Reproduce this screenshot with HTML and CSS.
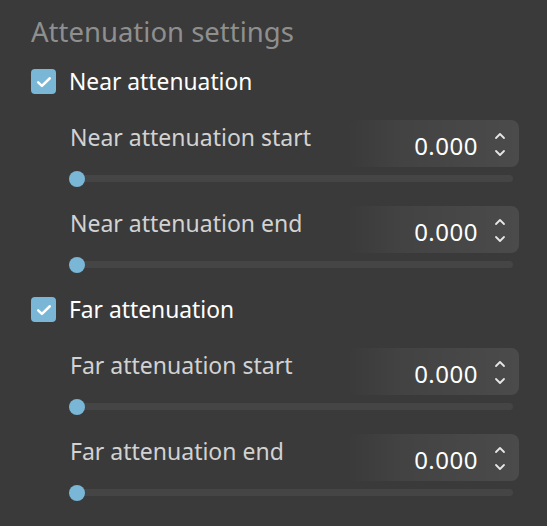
FILE: index.html
```html
<!DOCTYPE html>
<html>
<head>
<meta charset="utf-8">
<link rel="stylesheet" href="styles.css">
</head>
<body>
<div class="panel">
  <div class="title">Attenuation settings</div>

  <div class="section">
    <label class="check-row">
      <span class="checkbox"><svg viewBox="0 0 24 24" width="20" height="20"><path d="M5 12.5l4.5 4.2L19 7.5" fill="none" stroke="#fff" stroke-width="3" stroke-linecap="round" stroke-linejoin="round"/></svg></span>
      <span class="check-label">Near attenuation</span>
    </label>
    <div class="field">
      <div class="field-top">
        <span class="field-label">Near attenuation start</span>
        <div class="spin"><span class="spin-value">0.000</span><span class="arrows"><svg viewBox="0 0 12 28" width="12" height="28"><path d="M2 8l4-4 4 4M2 21l4 4 4-4" fill="none" stroke="#e6e6e6" stroke-width="1.8" stroke-linecap="round" stroke-linejoin="round"/></svg></span></div>
      </div>
      <div class="slider"><span class="thumb"></span></div>
    </div>
    <div class="field">
      <div class="field-top">
        <span class="field-label">Near attenuation end</span>
        <div class="spin"><span class="spin-value">0.000</span><span class="arrows"><svg viewBox="0 0 12 28" width="12" height="28"><path d="M2 8l4-4 4 4M2 21l4 4 4-4" fill="none" stroke="#e6e6e6" stroke-width="1.8" stroke-linecap="round" stroke-linejoin="round"/></svg></span></div>
      </div>
      <div class="slider"><span class="thumb"></span></div>
    </div>
  </div>

  <div class="section">
    <label class="check-row">
      <span class="checkbox"><svg viewBox="0 0 24 24" width="20" height="20"><path d="M5 12.5l4.5 4.2L19 7.5" fill="none" stroke="#fff" stroke-width="3" stroke-linecap="round" stroke-linejoin="round"/></svg></span>
      <span class="check-label">Far attenuation</span>
    </label>
    <div class="field">
      <div class="field-top">
        <span class="field-label">Far attenuation start</span>
        <div class="spin"><span class="spin-value">0.000</span><span class="arrows"><svg viewBox="0 0 12 28" width="12" height="28"><path d="M2 8l4-4 4 4M2 21l4 4 4-4" fill="none" stroke="#e6e6e6" stroke-width="1.8" stroke-linecap="round" stroke-linejoin="round"/></svg></span></div>
      </div>
      <div class="slider"><span class="thumb"></span></div>
    </div>
    <div class="field">
      <div class="field-top">
        <span class="field-label">Far attenuation end</span>
        <div class="spin"><span class="spin-value">0.000</span><span class="arrows"><svg viewBox="0 0 12 28" width="12" height="28"><path d="M2 8l4-4 4 4M2 21l4 4 4-4" fill="none" stroke="#e6e6e6" stroke-width="1.8" stroke-linecap="round" stroke-linejoin="round"/></svg></span></div>
      </div>
      <div class="slider"><span class="thumb"></span></div>
    </div>
  </div>
</div>
</body>
</html>
```

FILE: styles.css
```css
html, body {
  margin: 0;
  padding: 0;
  background: #3a3a3a;
  height: 100%;
}
body {
  font-family: "Noto Sans", "Open Sans", sans-serif;
  -webkit-font-smoothing: antialiased;
}
.panel {
  padding: 14px 28px 0 31px;
}
.title {
  font-size: 27.5px;
  line-height: 36px;
  color: #8f8f8f;
  height: 36px;
  white-space: nowrap;
}
.section {
  display: flex;
  flex-direction: column;
}
.section + .section {
  margin-top: 29px;
}
.title + .section {
  margin-top: 19px;
}
.check-row {
  display: flex;
  align-items: center;
  gap: 13px;
  height: 25px;
}
.checkbox {
  width: 25px;
  height: 25px;
  border-radius: 4px;
  background: #7ab7d7;
  display: flex;
  align-items: center;
  justify-content: center;
  flex: none;
}
.check-label {
  font-size: 22.8px;
  color: #ffffff;
  line-height: 25px;
  white-space: nowrap;
}
.field {
  margin-left: 39px;
  margin-top: 26px;
}
.field + .field {
  margin-top: 24px;
}
.field-top {
  display: flex;
  align-items: flex-start;
  justify-content: space-between;
  height: 47px;
}
.field-label {
  font-size: 23px;
  color: #d2d2d2;
  line-height: 30px;
  margin-top: 2px;
  white-space: nowrap;
}
.spin {
  width: 172px;
  height: 47px;
  flex: none;
  border-radius: 8px;
  background: linear-gradient(to right, rgba(255,255,255,0) 0%, rgba(255,255,255,0.045) 30%, rgba(255,255,255,0.085) 100%);
  display: flex;
  align-items: center;
  justify-content: flex-end;
  box-sizing: border-box;
  padding-right: 13px;
}
.spin-value {
  font-size: 24px;
  color: #ffffff;
  margin-right: 16px;
  margin-top: 4px;
  letter-spacing: 0.5px;
}
.arrows {
  display: flex;
  align-items: center;
}
.slider {
  position: relative;
  margin-top: 8px;
  margin-right: 6px;
  height: 7px;
  border-radius: 4px;
  background: #454545;
}
.thumb {
  position: absolute;
  left: -1px;
  top: -4.5px;
  width: 16px;
  height: 16px;
  border-radius: 50%;
  background: #7ab7d7;
}
```
